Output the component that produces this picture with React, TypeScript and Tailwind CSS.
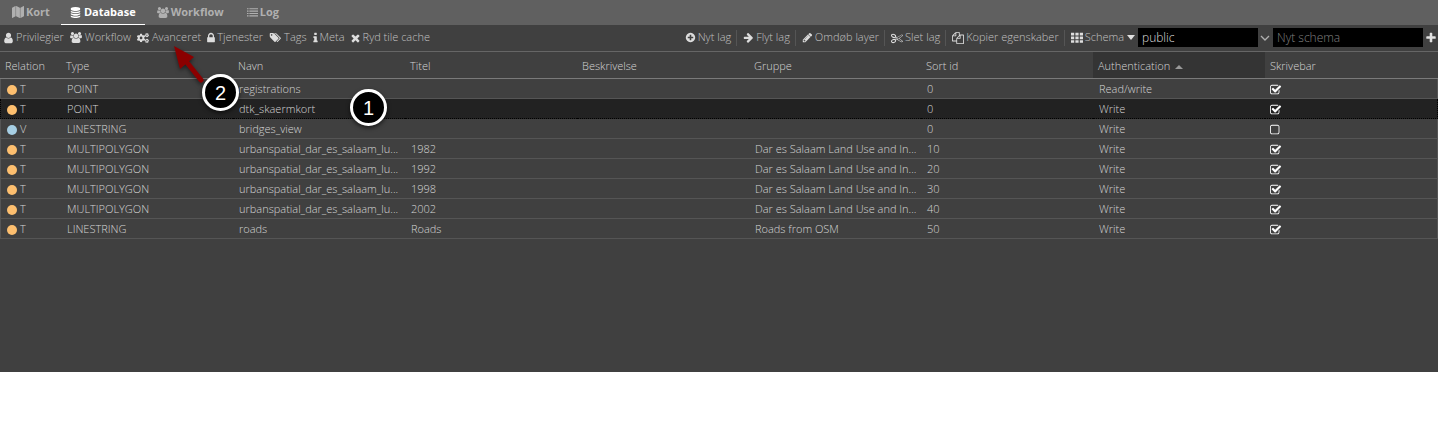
import type { ReactNode } from "react";
import { FaCogs } from "react-icons/fa";

const PATHS = {
  map: "M512 0q13 0 22.5 9.5t9.5 22.5v1472q0 20-17 28l-480 256q-7 4-15 4-13 0-22.5-9.5t-9.5-22.5v-1472q0-20 17-28l480-256q7-4 15-4zm1248 0q13 0 22.5 9.5t9.5 22.5v1472q0 20-17 28l-480 256q-7 4-15 4-13 0-22.5-9.5t-9.5-22.5v-1472q0-20 17-28l480-256q7-4 15-4zm-1120 0q8 0 14 3l512 256q18 10 18 29v1472q0 13-9.5 22.5t-22.5 9.5q-8 0-14-3l-512-256q-18-10-18-29v-1472q0-13 9.5-22.5t22.5-9.5z",
  database:
    "M896 768q237 0 443-43t325-127v170q0 69-103 128t-280 93.5-385 34.5-385-34.5-280-93.5-103-128v-170q119 84 325 127t443 43zm0 768q237 0 443-43t325-127v170q0 69-103 128t-280 93.5-385 34.5-385-34.5-280-93.5-103-128v-170q119 84 325 127t443 43zm0-384q237 0 443-43t325-127v170q0 69-103 128t-280 93.5-385 34.5-385-34.5-280-93.5-103-128v-170q119 84 325 127t443 43zm0-1152q208 0 385 34.5t280 93.5 103 128v128q0 69-103 128t-280 93.5-385 34.5-385-34.5-280-93.5-103-128v-128q0-69 103-128t280-93.5 385-34.5z",
  group:
    "M657 896q-162 5-265 128h-134q-82 0-138-40.5t-56-118.5q0-353 124-353 6 0 43.5 21t97.5 42.5 119 21.5q67 0 133-23-5 37-5 66 0 159 93 293zm1071 637q0 120-73 189.5t-194 69.5h-874q-121 0-194-69.5t-73-189.5q0-53 3.5-103.5t14-109 26.5-108.5 43-97.5 62-81 85.5-53.5 111.5-20q10 0 43 21.5t73 48 107 48 135 21.5 135-21.5 107-48 73-48 43-21.5q61 0 111.5 20t85.5 53.5 62 81 43 97.5 26.5 108.5 14 109 3.5 103.5zm-1024-1277q0 106-75 181t-181 75-181-75-75-181 75-181 181-75 181 75 75 181zm704 384q0 159-112.5 271.5t-271.5 112.5-271.5-112.5-112.5-271.5 112.5-271.5 271.5-112.5 271.5 112.5 112.5 271.5zm576 225q0 78-56 118.5t-138 40.5h-134q-103-123-265-128 93-134 93-293 0-29-5-66 66 23 133 23 59 0 119-21.5t97.5-42.5 43.5-21q124 0 124 353zm-128-609q0 106-75 181t-181 75-181-75-75-181 75-181 181-75 181 75 75 181z",
  list: "M0 192h256v192H0zM0 576h256v192H0zM0 960h256v192H0zM0 1344h256v192H0zM384 192h1408v192H384zM384 576h1408v192H384zM384 960h1408v192H384zM384 1344h1408v192H384z",
  user: "M1536 1399q0 109-62.5 187t-150.5 78h-854q-88 0-150.5-78t-62.5-187q0-85 8.5-160.5t31.5-152 58.5-131 94-89 134.5-34.5q131 128 313 128t313-128q76 0 134.5 34.5t94 89 58.5 131 31.5 152 8.5 160.5zm-256-887q0 159-112.5 271.5t-271.5 112.5-271.5-112.5-112.5-271.5 112.5-271.5 271.5-112.5 271.5 112.5 112.5 271.5z",
  lock: "M640 768h512v-192q0-106-75-181t-181-75-181 75-75 181v192zm832 96v576q0 40-28 68t-68 28h-960q-40 0-68-28t-28-68v-576q0-40 28-68t68-28h32v-192q0-184 132-316t316-132 316 132 132 316v192h32q40 0 68 28t28 68z",
  tags: "M576 448q0-53-37.5-90.5t-90.5-37.5-90.5 37.5-37.5 90.5 37.5 90.5 90.5 37.5 90.5-37.5 37.5-90.5zm1067 576q0 53-37 90l-491 492q-39 37-91 37-53 0-90-37l-715-716q-38-37-64.5-101t-26.5-117v-416q0-52 38-90t90-38h416q53 0 117 26.5t102 64.5l715 714q37 39 37 91zm384 0q0 53-37 90l-491 492q-39 37-91 37-36 0-59-14t-53-45l470-470q37-37 37-90 0-52-37-91l-715-714q-38-38-102-64.5t-117-26.5h224q53 0 117 26.5t102 64.5l715 714q37 39 37 91z",
  info: "M1216 1344v128q0 26-19 45t-45 19h-512q-26 0-45-19t-19-45v-128q0-26 19-45t45-19h64v-384h-64q-26 0-45-19t-19-45v-128q0-26 19-45t45-19h384q26 0 45 19t19 45v576h64q26 0 45 19t19 45zm-128-1152v192q0 26-19 45t-45 19h-256q-26 0-45-19t-19-45v-192q0-26 19-45t45-19h256q26 0 45 19t19 45z",
  times:
    "M1490 1322q0 40-28 68l-136 136q-28 28-68 28t-68-28l-294-294-294 294q-28 28-68 28t-68-28l-136-136q-28-28-28-68t28-68l294-294-294-294q-28-28-28-68t28-68l136-136q28-28 68-28t68 28l294 294 294-294q28-28 68-28t68 28l136 136q28 28 28 68t-28 68l-294 294 294 294q28 28 28 68z",
  plusCircle:
    "M1344 960v-128q0-26-19-45t-45-19h-256v-256q0-26-19-45t-45-19h-128q-26 0-45 19t-19 45v256h-256q-26 0-45 19t-19 45v128q0 26 19 45t45 19h256v256q0 26 19 45t45 19h128q26 0 45-19t19-45v-256h256q26 0 45-19t19-45zm320-64q0 209-103 385.5t-279.5 279.5-385.5 103-385.5-103-279.5-279.5-103-385.5 103-385.5 279.5-279.5 385.5-103 385.5 103 279.5 279.5 103 385.5z",
  arrowRight:
    "M1600 960q0 54-37 91l-651 651q-39 37-91 37-51 0-90-37l-75-75q-38-38-38-91t38-91l293-293h-704q-52 0-84.5-37.5t-32.5-90.5v-128q0-53 32.5-90.5t84.5-37.5h704l-293-294q-38-36-38-90t38-90l75-75q38-38 90-38 53 0 91 38l651 651q37 35 37 90z",
  pencil:
    "M491 1536l91-91-235-235-91 91v107h128v128h107zm523-928q0-22-22-22-10 0-17 7l-542 542q-7 7-7 17 0 22 22 22 10 0 17-7l542-542q7-7 7-17zm-54-192l416 416-832 832h-416v-416zm683 96q0 53-37 90l-166 166-416-416 166-165q36-38 90-38 53 0 91 38l235 234q37 39 37 91z",
  cut: "M960 896q26 0 45 19t19 45-19 45-45 19-45-19-19-45 19-45 45-19zm300 64l507 398q28 20 25 56-5 35-35 51l-128 64q-13 7-29 7-17 0-31-8l-690-387-110 66q-8 4-12 5 14 49 10 97-7 77-56 147.5t-132 123.5q-132 84-277 84-136 0-222-78-90-84-79-207 7-76 56-147t131-124q132-84 278-84 83 0 151 31 9-13 22-22l122-73-122-73q-13-9-22-22-68 31-151 31-146 0-278-84-82-53-131-124t-56-147q-5-59 15.5-113t63.5-93q85-79 222-79 145 0 277 84 83 52 132 123t56 148q4 48-10 97 4 1 12 5l110 66 690-387q14-8 31-8 16 0 29 7l128 64q30 16 35 51 3 36-25 56zm-681-260q46-42 21-108t-106-117q-92-59-192-59-74 0-113 36-46 42-21 108t106 117q92 59 192 59 74 0 113-36zm-85 745q81-51 106-117t-21-108q-39-36-113-36-100 0-192 59-81 51-106 117t21 108q39 36 113 36 100 0 192-59zm178-613l96 58v-11q0-36 33-56l14-8-79-44-26 26q-3 3-10 11t-12 12q-2 2-4 3.5t-3 2.5zm224 224l96 32 736-576-128-64-768 431v113l-160 96 9 8q2 2 7 6 4 4 11 12t11 12l26 26zm704 416l128-64-520-408-177 138q-2 3-13 7z",
  copy: "M1696 384q40 0 68 28t28 68v1216q0 40-28 68t-68 28h-960q-40 0-68-28t-28-68v-288h-544q-40 0-68-28t-28-68v-672q0-40 20-88t48-76l408-408q28-28 76-48t88-20h416q40 0 68 28t28 68v328q68-40 128-40h416zm-544 213l-299 299h299v-299zm-640-384l-299 299h299v-299zm196 647l316-316v-416h-384v416q0 40-28 68t-68 28h-416v640h512v-256q0-40 20-88t48-76zm956 804v-1152h-384v416q0 40-28 68t-68 28h-416v640h896z",
  th: "M0 128h480v400H0zM656 128h480v400H656zM1312 128h480v400h-480zM0 672h480v400H0zM656 672h480v400H656zM1312 672h480v400h-480zM0 1216h480v400H0zM656 1216h480v400H656zM1312 1216h480v400h-480z",
  plus: "M1600 736v192q0 40-28 68t-68 28h-416v416q0 40-28 68t-68 28h-192q-40 0-68-28t-28-68v-416h-416q-40 0-68-28t-28-68v-192q0-40 28-68t68-28h416v-416q0-40 28-68t68-28h192q40 0 68 28t28 68v416h416q40 0 68 28t28 68z",
  checked:
    "M1472 930v318q0 119-84.5 203.5t-203.5 84.5h-832q-119 0-203.5-84.5t-84.5-203.5v-832q0-119 84.5-203.5t203.5-84.5h832q63 0 117 25 15 7 18 23 3 17-9 29l-49 49q-10 10-23 10-3 0-9-2-23-6-45-6h-832q-66 0-113 47t-47 113v832q0 66 47 113t113 47h832q66 0 113-47t47-113v-254q0-13 9-22l64-64q10-10 23-10 6 0 12 3 20 8 20 29zm231-489l-814 814q-24 24-57 24t-57-24l-430-430q-24-24-24-57t24-57l110-110q24-24 57-24t57 24l263 263 647-647q24-24 57-24t57 24l110 110q24 24 24 57t-24 57z",
  unchecked:
    "M1184 256h-832q-66 0-113 47t-47 113v832q0 66 47 113t113 47h832q66 0 113-47t47-113v-832q0-66-47-113t-113-47zm288 160v832q0 119-84.5 203.5t-203.5 84.5h-832q-119 0-203.5-84.5t-84.5-203.5v-832q0-119 84.5-203.5t203.5-84.5h832q119 0 203.5 84.5t84.5 203.5z",
};

type IconName = keyof typeof PATHS;

function Icon({ name, box = "0 0 1792 1792", className = "size-3" }: { name: IconName; box?: string; className?: string }) {
  return (
    <svg viewBox={box} className={`shrink-0 ${className}`} fill="currentColor" aria-hidden="true">
      <path d={PATHS[name]} />
    </svg>
  );
}

const groupIcon = <Icon name="group" box="64 0 1920 1792" className="h-[11px] w-3" />;

function Tab({ icon, label, active = false }: { icon: ReactNode; label: string; active?: boolean }) {
  return (
    <a
      href="#"
      aria-current={active ? "page" : undefined}
      className={
        active
          ? "flex items-center gap-[3px] border-b border-white px-[9px] text-white"
          : "flex items-center gap-[2px] border-b border-transparent pr-[11px] pl-3 text-[#b0b0b0]"
      }
    >
      {icon}
      {label}
    </a>
  );
}

function Tool({ icon, label, className = "gap-[2px]" }: { icon: ReactNode; label: string; className?: string }) {
  return (
    <button type="button" className={`flex items-center whitespace-nowrap text-[#c0c0c0] ${className}`}>
      <span className="text-[#dddddd]">{icon}</span>
      {label}
    </button>
  );
}

const Separator = () => <span className="mr-[6px] ml-[5px] h-4 w-px bg-[#555555]" />;

const columns = ["Relation", "Type", "Navn", "Titel", "Beskrivelse", "Gruppe", "Sort id", "Authentication", "Skrivebar"];

type Row = { rel: "T" | "V"; cells: string[]; writable: boolean; selected?: boolean };

const rows: Row[] = [
  { rel: "T", cells: ["POINT", "registrations", "", "", "", "0", "Read/write"], writable: true },
  { rel: "T", cells: ["POINT", "dtk_skaermkort", "", "", "", "0", "Write"], writable: true, selected: true },
  { rel: "V", cells: ["LINESTRING", "bridges_view", "", "", "", "0", "Write"], writable: false },
  { rel: "T", cells: ["MULTIPOLYGON", "urbanspatial_dar_es_salaam_lu...", "1982", "", "Dar es Salaam Land Use and In...", "10", "Write"], writable: true },
  { rel: "T", cells: ["MULTIPOLYGON", "urbanspatial_dar_es_salaam_lu...", "1992", "", "Dar es Salaam Land Use and In...", "20", "Write"], writable: true },
  { rel: "T", cells: ["MULTIPOLYGON", "urbanspatial_dar_es_salaam_lu...", "1998", "", "Dar es Salaam Land Use and In...", "30", "Write"], writable: true },
  { rel: "T", cells: ["MULTIPOLYGON", "urbanspatial_dar_es_salaam_lu...", "2002", "", "Dar es Salaam Land Use and In...", "40", "Write"], writable: true },
  { rel: "T", cells: ["LINESTRING", "roads", "Roads", "", "Roads from OSM", "50", "Write"], writable: true },
];

function Marker({ label, className }: { label: string; className: string }) {
  return (
    <span
      className={`absolute flex size-[37px] items-center justify-center rounded-full border-[3px] border-white bg-black font-['Liberation_Sans',sans-serif] text-xl font-normal text-white shadow-[0_2px_4px_rgba(0,0,0,0.6)] ${className}`}
    >
      {label}
    </span>
  );
}

export default function App() {
  return (
    <main className="relative bg-white font-['Open_Sans',sans-serif] text-[11px] font-light">
      <div className="bg-[#404040] pb-[133px]">
        <nav className="flex h-[25px] bg-[#606060] font-bold">
          <Tab icon={<Icon name="map" className="size-3" />} label="Kort" />
          <Tab icon={<Icon name="database" className="size-[11px]" />} label="Database" active />
          <Tab icon={groupIcon} label="Workflow" />
          <Tab icon={<Icon name="list" className="size-[11px]" />} label="Log" />
        </nav>

        <div className="flex h-[27px] items-center justify-between border-b border-[#666666] pr-px pb-px pl-1">
          <div className="flex items-center gap-[6px]">
            <Tool className="gap-[3px]" icon={<Icon name="user" box="256 0 1280 1792" className="h-3 w-[9px]" />} label="Privilegier" />
            <Tool className="gap-[3px]" icon={groupIcon} label="Workflow" />
            <Tool className="gap-[3px]" icon={<FaCogs className="size-3" />} label="Avanceret" />
            <Tool icon={<Icon name="lock" box="320 0 1152 1792" className="h-3 w-2" />} label="Tjenester" />
            <Tool className="gap-[3px]" icon={<Icon name="tags" box="0 0 2048 1792" className="h-[11px] w-3" />} label="Tags" />
            <Tool icon={<Icon name="info" box="560 0 672 1792" className="h-3 w-[5px]" />} label="Meta" />
            <Tool className="gap-[3px]" icon={<Icon name="times" box="256 0 1280 1792" className="h-3 w-[9px]" />} label="Ryd tile cache" />
          </div>
          <div className="flex items-center">
            <Tool icon={<Icon name="plusCircle" className="size-[11px]" />} label="Nyt lag" />
            <Separator />
            <Tool icon={<Icon name="arrowRight" className="size-[11px]" />} label="Flyt lag" />
            <Separator />
            <Tool icon={<Icon name="pencil" className="size-[11px]" />} label="Omdøb layer" />
            <Separator />
            <Tool icon={<Icon name="cut" className="size-3" />} label="Slet lag" />
            <Separator />
            <Tool icon={<Icon name="copy" className="size-3" />} label="Kopier egenskaber" />
            <Separator />
            <Tool icon={<Icon name="th" className="size-3" />} label="Schema" />
            <svg viewBox="0 0 8 5" className="mx-[3px] h-[5px] w-2" fill="#e0e0e0" aria-hidden="true">
              <path d="M0 0h8L4 5z" />
            </svg>
            <label className="relative flex items-center">
              <select aria-label="Schema" className="h-[19px] w-[135px] appearance-none bg-linear-to-r from-black from-[120px] to-transparent to-[120px] pl-1 text-xs text-[#dddddd] outline-none">
                <option>public</option>
              </select>
              <svg viewBox="0 0 10 6" className="pointer-events-none absolute right-[3px] h-[6px] w-[10px]" fill="none" stroke="#b0b0b0" strokeWidth="1.3" aria-hidden="true">
                <path d="M1 1l4 4 4-4" />
              </svg>
            </label>
            <input aria-label="Nyt schema" placeholder="Nyt schema" className="h-[19px] w-[150px] bg-black px-1 text-xs text-[#dddddd] outline-none placeholder:text-[#808080]" />
            <button type="button" aria-label="Tilføj schema" className="ml-[2px] text-[#e0e0e0]">
              <Icon name="plus" />
            </button>
          </div>
        </div>

        <table className="w-full table-fixed border-separate border-spacing-0 text-[#d4d4d4]">
          <colgroup>
            <col className="w-[61px]" />
            <col />
            <col />
            <col />
            <col />
            <col />
            <col />
            <col />
            <col className="w-[173px]" />
          </colgroup>
          <thead>
            <tr className="h-[27px]">
              {columns.map((name) => (
                <th
                  key={name}
                  scope="col"
                  aria-sort={name === "Authentication" ? "ascending" : undefined}
                  className={
                    name === "Authentication"
                      ? "border-b border-[#7a7a7a] bg-[#343434] pt-[2px] pb-0 pl-[5px] text-left font-light"
                      : "border-b border-[#7a7a7a] pt-[2px] pb-0 pl-[5px] text-left font-light"
                  }
                >
                  {name}
                  {name === "Authentication" && (
                    <svg viewBox="0 0 8 4" className="ml-[5px] inline h-1 w-2" fill="#999999" aria-hidden="true">
                      <path d="M4 0l4 4H0z" />
                    </svg>
                  )}
                </th>
              ))}
            </tr>
          </thead>
          <tbody>
            {rows.map((row, i) => {
              const line = row.selected ? "border-b border-dotted border-black bg-[#222222]" : "border-b border-[#555555]";
              return (
                <tr key={i} className="h-5">
                  <td className={`${line} border-l pt-[2px] pb-0 pl-[6px]`}>
                    <span className="flex items-center gap-[3px]">
                      <span className={row.rel === "T" ? "size-[10px] rounded-full bg-[#fdbf6f]" : "size-[10px] rounded-full bg-[#a6cee3]"} />
                      {row.rel}
                    </span>
                  </td>
                  {row.cells.map((cell, c) => (
                    <td key={c} className={`${line} truncate pt-[2px] pb-0 pl-[6px]`}>
                      {cell}
                    </td>
                  ))}
                  <td className={`${line} border-r pt-[2px] pb-0 pl-[5px]`}>
                    <label className="relative flex h-3 w-3 items-center text-white">
                      <input type="checkbox" defaultChecked={row.writable} aria-label="Skrivebar" className="peer absolute inset-0 size-3 appearance-none" />
                      <Icon name="checked" box="64 0 1792 1792" className="pointer-events-none hidden size-3 peer-checked:block" />
                      <Icon name="unchecked" box="64 0 1792 1792" className="pointer-events-none block size-3 peer-checked:hidden" />
                    </label>
                  </td>
                </tr>
              );
            })}
          </tbody>
        </table>
      </div>

      <svg viewBox="0 0 50 60" className="pointer-events-none absolute top-[40px] left-[168px] h-[60px] w-[50px] drop-shadow-[0_2px_2px_rgba(0,0,0,0.5)]" aria-hidden="true">
        <path d="M17 20L33 40" stroke="#8b0000" strokeWidth="5" strokeLinecap="round" />
        <path d="M6 6L26 17L12 29z" fill="#8b0000" />
      </svg>
      <Marker label="2" className="top-[74px] left-[202px]" />
      <Marker label="1" className="top-[89px] left-[350px]" />
    </main>
  );
}
